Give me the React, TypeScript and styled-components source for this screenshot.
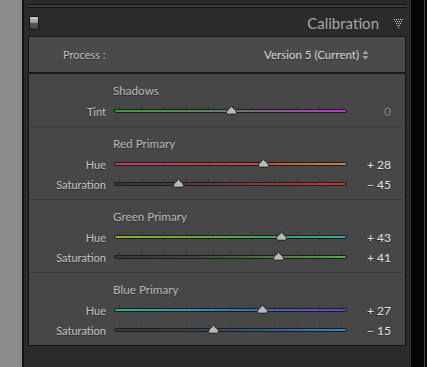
import React from "react";
import styled, { createGlobalStyle } from "styled-components";

const GlobalStyle = createGlobalStyle`
  html, body {
    margin: 0;
    padding: 0;
    background: #000;
  }
  body {
    font-family: Lato, "Noto Sans", sans-serif;
  }
`;

type SliderDef = {
  label: string;
  value: number;
  track: string;
};

type SectionDef = {
  title: string;
  sliders: SliderDef[];
};

const sections: SectionDef[] = [
  {
    title: "Shadows",
    sliders: [
      {
        label: "Tint",
        value: 0,
        track: "linear-gradient(90deg, #3f9a3f 0%, #5d8a5d 35%, #7a6a7e 60%, #b23cc4 100%)",
      },
    ],
  },
  {
    title: "Red Primary",
    sliders: [
      {
        label: "Hue",
        value: 28,
        track: "linear-gradient(90deg, #c03a78 0%, #c23c4c 40%, #c0503a 65%, #c48a3a 100%)",
      },
      {
        label: "Saturation",
        value: -45,
        track: "linear-gradient(90deg, #383838 0%, #5a3a3a 35%, #9a3a3a 70%, #c63434 100%)",
      },
    ],
  },
  {
    title: "Green Primary",
    sliders: [
      {
        label: "Hue",
        value: 43,
        track: "linear-gradient(90deg, #92b030 0%, #5aa83a 40%, #3ca85a 70%, #32a8a0 100%)",
      },
      {
        label: "Saturation",
        value: 41,
        track: "linear-gradient(90deg, #383838 0%, #3e4a3c 35%, #4c7a42 70%, #58a848 100%)",
      },
    ],
  },
  {
    title: "Blue Primary",
    sliders: [
      {
        label: "Hue",
        value: 27,
        track: "linear-gradient(90deg, #34a888 0%, #3498a8 30%, #3470b4 60%, #7040c4 100%)",
      },
      {
        label: "Saturation",
        value: -15,
        track: "linear-gradient(90deg, #383838 0%, #37424e 35%, #34628e 70%, #3488c8 100%)",
      },
    ],
  },
];

const formatValue = (v: number) => {
  if (v === 0) return "0";
  return v > 0 ? `+ ${v}` : `\u2212 ${Math.abs(v)}`;
};

const App = () => {
  return (
    <>
      <GlobalStyle />
      <Screen>
        <Gutter />
        <Panel>
          <TopStrip />
          <Header>
            <Toggle />
            <Title>Calibration</Title>
            <Disclosure />
          </Header>
          <Box>
            <ProcessRow>
              <ProcessLabel>Process :</ProcessLabel>
              <ProcessValue>
                Version 5 (Current)
                <Stepper />
              </ProcessValue>
            </ProcessRow>
            {sections.map((s) => (
              <Section key={s.title}>
                <SectionTitle>{s.title}</SectionTitle>
                {s.sliders.map((sl) => (
                  <Row key={sl.label}>
                    <Label>{sl.label}</Label>
                    <Slider track={sl.track} value={sl.value} />
                    <Value $zero={sl.value === 0}>{formatValue(sl.value)}</Value>
                  </Row>
                ))}
              </Section>
            ))}
          </Box>
        </Panel>
        <RightEdge>
          <EdgeLine />
        </RightEdge>
      </Screen>
    </>
  );
};

export default App;

const Toggle = () => (
  <ToggleBox>
    <ToggleTop />
    <ToggleBottom />
  </ToggleBox>
);

const Disclosure = () => {
  const dots: React.ReactNode[] = [];
  for (let r = 0; r < 5; r++) {
    for (let c = 0; c < 5 - r; c++) {
      dots.push(<rect key={`${r}-${c}`} x={r + c * 2} y={r * 2} width={1} height={1} fill="#d2d2d2" />);
    }
  }
  return (
    <DisclosureIcon width="9" height="9" viewBox="0 0 9 9">
      {dots}
    </DisclosureIcon>
  );
};

const Stepper = () => (
  <StepperIcon width="7" height="10" viewBox="0 0 7 10">
    <path d="M3.5 0.5 L6.5 4 L0.5 4 Z" fill="#a4a4a4" />
    <path d="M3.5 9.5 L6.5 6 L0.5 6 Z" fill="#a4a4a4" />
  </StepperIcon>
);

const Slider = ({ track, value }: { track: string; value: number }) => {
  const pct = ((value + 100) / 200) * 100;
  return (
    <SliderWrap>
      <Ticks>
        {Array.from({ length: 11 }).map((_, i) => (
          <Tick key={i} />
        ))}
      </Ticks>
      <Track style={{ background: track }} />
      <Thumb style={{ left: `${pct}%` }} width="11" height="10" viewBox="0 0 11 10">
        <path
          d="M5.5 0.5 L7 3 Q10.5 5 10.5 7.5 Q10.5 9.5 8 9.5 L3 9.5 Q0.5 9.5 0.5 7.5 Q0.5 5 4 3 Z"
          fill="#b8b8b8"
          stroke="#262626"
          strokeWidth="1"
        />
        <path d="M2 8.5 L9 8.5" stroke="#8c8c8c" strokeWidth="1" />
      </Thumb>
    </SliderWrap>
  );
};

const Screen = styled.div`
  display: flex;
  width: 427px;
  height: 367px;
  overflow: hidden;
  background: #000;
`;

const Gutter = styled.div`
  width: 22px;
  flex: none;
  background: #8c8c8c;
  border-right: 2px solid #141414;
`;

const Panel = styled.div`
  flex: none;
  width: 378px;
  padding: 4px 5px 0 4px;
  background: #2b2b2b;
  display: flex;
  flex-direction: column;
`;

const TopStrip = styled.div`
  height: 2px;
  background: #3c3c3c;
  border-top: 1px solid #121212;
  border-bottom: 1px solid #121212;
`;

const Header = styled.div`
  height: 28px;
  display: flex;
  align-items: center;
  padding-left: 1px;
`;

const ToggleBox = styled.div`
  width: 8px;
  height: 12px;
  border: 1px solid #141414;
  display: flex;
  flex-direction: column;
  margin-top: 1px;
`;

const ToggleTop = styled.div`
  flex: 1;
  background: linear-gradient(#d0d0d0, #8a8a8a);
`;

const ToggleBottom = styled.div`
  flex: 1;
  background: linear-gradient(#5a5a5a, #404040);
`;

const Title = styled.div`
  margin-left: auto;
  font-size: 15px;
  color: #a9a9a9;
  margin-top: 2px;
`;

const DisclosureIcon = styled.svg`
  margin: 3px 3px 0 15px;
  display: block;
`;

const Box = styled.div`
  border: 1px solid #141414;
  background: #474747;
  height: 308px;
`;

const ProcessRow = styled.div`
  height: 35px;
  display: flex;
  align-items: center;
  background: #4a4a4a;
  border-bottom: 2px solid #1a1a1a;
  text-shadow: 0 1px 0 rgba(0, 0, 0, 0.45);
`;

const ProcessLabel = styled.div`
  margin-left: 34px;
  font-size: 11px;
  color: #c0c0c0;
`;

const ProcessValue = styled.div`
  margin-left: auto;
  margin-right: 36px;
  font-size: 11.5px;
  color: #dcdcdc;
  display: flex;
  align-items: center;
`;

const StepperIcon = styled.svg`
  margin-left: 3px;
  display: block;
`;

const Section = styled.div`
  padding: 8px 0 5px;
  & + & {
    border-top: 1px solid #3b3b3b;
  }
`;

const SectionTitle = styled.div`
  height: 16px;
  line-height: 17px;
  margin-left: 84px;
  margin-bottom: 3px;
  font-size: 11.7px;
  color: #bcbcbc;
  text-shadow: 0 1px 0 rgba(0, 0, 0, 0.45);
`;

const Row = styled.div`
  height: 20px;
  display: flex;
  align-items: center;
`;

const Label = styled.div`
  width: 77px;
  text-align: right;
  font-size: 11px;
  line-height: 15px;
  padding-top: 1px;
  color: #c6c6c6;
  text-shadow: 0 1px 0 rgba(0, 0, 0, 0.45);
`;

const SliderWrap = styled.div`
  position: relative;
  margin-left: 8px;
  width: 233px;
  height: 10px;
  display: flex;
  flex-direction: column;
  justify-content: flex-end;
  margin-bottom: 2px;
`;

const Ticks = styled.div`
  display: flex;
  justify-content: space-between;
  padding: 0 5px;
  height: 2px;
  margin-bottom: 1px;
`;

const Tick = styled.div`
  width: 1px;
  height: 2px;
  background: #363636;
`;

const Track = styled.div`
  height: 2px;
  border: 1px solid #1c1c1c;
  border-radius: 3px;
  margin-bottom: 2px;
`;

const Thumb = styled.svg`
  position: absolute;
  top: 0;
  margin-left: -5px;
  display: block;
`;

const Value = styled.div<{ $zero: boolean }>`
  width: 44px;
  text-align: right;
  font-size: 12px;
  color: ${(p) => (p.$zero ? "#8e8e8e" : "#e6e6e6")};
  text-shadow: 0 1px 0 rgba(0, 0, 0, 0.45);
`;

const RightEdge = styled.div`
  flex: 1;
  background: #050505;
  display: flex;
  justify-content: flex-end;
  padding-right: 2px;
`;

const EdgeLine = styled.div`
  width: 1px;
  background: #4a4a4a;
`;
